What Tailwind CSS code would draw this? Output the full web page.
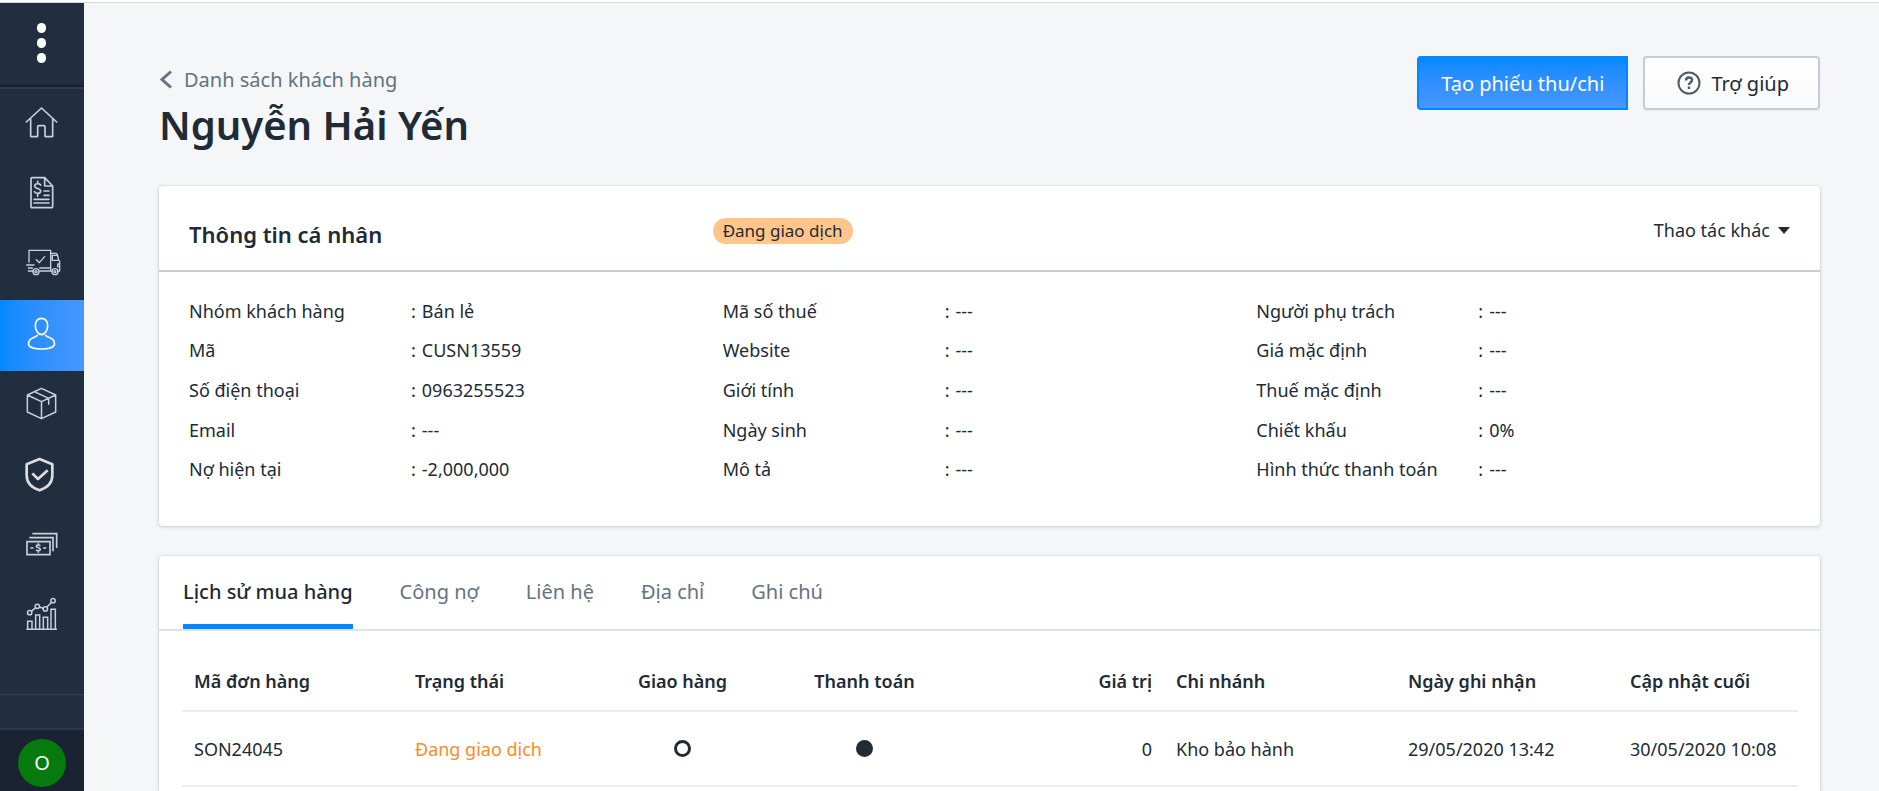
<!DOCTYPE html>
<html lang="vi">
<head>
<meta charset="utf-8">
<title>Nguyễn Hải Yến</title>
<script src="https://cdn.jsdelivr.net/npm/@tailwindcss/browser@4"></script>
</head>
<body class="flex h-screen flex-col overflow-hidden bg-[#f4f6f8] font-['Noto_Sans','Open_Sans',sans-serif] text-lg text-[#212b36]">
<div class="h-[3px] shrink-0 border-b border-[#d5d9de] bg-white"></div>
<div class="flex min-h-0 flex-1">

<aside class="flex w-[84px] shrink-0 flex-col bg-[#212e3f] text-[#c3d2e0]">
  <button type="button" aria-label="Menu" class="flex h-[84px] w-full shrink-0 flex-col items-center justify-center gap-[5px] border-b-2 border-[#19212e] pr-0.5 pb-0.5">
    <span class="h-2.5 w-[9px] rounded-full bg-white"></span>
    <span class="h-2.5 w-[9px] rounded-full bg-white"></span>
    <span class="h-2.5 w-[9px] rounded-full bg-white"></span>
  </button>
  <nav class="grid h-[565px] shrink-0 auto-rows-fr border-t-2 border-[#263d54]">
    <a href="#" aria-label="Trang chủ" class="flex items-center justify-center pr-0.5 pb-1">
      <svg class="size-[33px] overflow-visible" viewBox="0 0 99 99" fill="none" stroke="currentColor" stroke-width="5" stroke-linecap="round" stroke-linejoin="round"><path d="M4 48 49.5 6 95 48M17 40v50q0 2 2 2h17q2 0 2-2V63q0-4 4-4h14q4 0 4 4v27q0 2 2 2h19q2 0 2-2V40"/></svg>
    </a>
    <a href="#" aria-label="Đơn hàng" class="flex items-center justify-center pr-0.5 pb-1">
      <svg class="size-[33px] overflow-visible" viewBox="0 0 99 99" fill="none" stroke="currentColor" stroke-width="5" stroke-linecap="round" stroke-linejoin="round"><path d="M21 5h38l24 25v62q0 3-3 3H21q-3 0-3-3V8q0-3 3-3zM59 5v25h24M57 45h15M57 58h15M27 70h45M27 81h45"/><path d="M47 27c-4-6-18-5-18 3 0 9 18 6 18 15 0 9-15 9-19 2M38 16v6M38 53v8"/></svg>
    </a>
    <a href="#" aria-label="Giao hàng" class="flex items-center justify-center pr-0.5 pb-1">
      <svg class="size-[33px] overflow-visible" viewBox="0 0 99 99" fill="none" stroke="currentColor" stroke-width="4" stroke-linecap="round" stroke-linejoin="round"><path d="M12 49V13h65v62H44M5 57h22M10 66h12M10 75h14M44 66h34M34 41l9 9 16-18M77 22h16q3 0 4 4l4 16 3 4v29h-6M82 75h-2M82 28v15h19M82 28h13M104 54h-6v8h6"/><circle cx="33" cy="77" r="9"/><circle cx="33" cy="77" r="3"/><circle cx="90" cy="77" r="9"/><circle cx="90" cy="77" r="3"/></svg>
    </a>
    <a href="#" aria-label="Khách hàng" aria-current="page" class="flex items-center justify-center bg-linear-to-r from-[#0088ff] to-[#4797ff] pr-0.5 pb-1 text-white">
      <svg class="size-[33px] overflow-visible" viewBox="0 0 99 99" fill="none" stroke="currentColor" stroke-width="5" stroke-linecap="round" stroke-linejoin="round"><path d="M49.5 4C61 4 68 13 68 26S60 53 49.5 53 31 39 31 26 38 4 49.5 4zM37 55c-5 8-26 6-26 22v7c3 8 22 12 38.5 12S85 92 88 84v-7c0-16-21-14-26-22"/></svg>
    </a>
    <a href="#" aria-label="Sản phẩm" class="flex items-center justify-center pr-0.5 pb-1">
      <svg class="size-[33px] overflow-visible" viewBox="0 0 99 99" fill="none" stroke="currentColor" stroke-width="4.5" stroke-linecap="round" stroke-linejoin="round"><path d="M49.5 4 92 24v51L49.5 95 7 75V24zM7 24l42.5 20L92 24M49.5 44v51M28 14l43 20v18"/></svg>
    </a>
    <a href="#" aria-label="Bảo hành" class="flex items-center justify-center pr-0.5 pb-1 text-[#dddddd]">
      <svg class="mr-[3px] size-[33px] overflow-visible" viewBox="0 0 99 99" fill="none" stroke="currentColor" stroke-width="8" stroke-linejoin="round"><path d="M49.5 3 88 19v33c0 23-17 38-38.5 45C28 90 11 75 11 52V19z"/><path d="m28 46 17 17 29-26"/></svg>
    </a>
    <a href="#" aria-label="Sổ quỹ" class="flex items-center justify-center pr-0.5 pb-1">
      <svg class="size-[33px] overflow-visible" viewBox="0 0 99 99" fill="none" stroke="currentColor" stroke-width="5"><path d="M6 41h69v39H6zM13 29h71v41M22 17h73v43M16 60h10M54 60h10"/><path d="M46 54c-3-4-12-4-12 1s12 4 12 9-9 6-13 1M40 46v5M40 68v6"/></svg>
    </a>
    <a href="#" aria-label="Báo cáo" class="flex items-center justify-center pr-0.5 pb-1">
      <svg class="size-[33px] overflow-visible" viewBox="0 0 99 99" fill="none" stroke="currentColor" stroke-width="4.5"><path d="M4 94h92M8 94V70h13v24M32 94V51h12v43M55 94V58h13v36M78 94V34h13v60M19 40l13-11M43 27l12 4M65 28l15-15"/><circle cx="14" cy="44" r="6.5"/><circle cx="37" cy="25" r="6.5"/><circle cx="61" cy="33" r="6.5"/><circle cx="84" cy="8" r="6.5"/></svg>
    </a>
  </nav>
  <div class="mt-auto h-[34px] shrink-0 border-t border-[#2d4163]"></div>
  <div class="flex h-[63px] shrink-0 items-center justify-center border-t-2 border-[#243a50] bg-[#1b2333] pt-1">
    <button type="button" class="size-12 rounded-full bg-[#067a0d] text-xl text-white">O</button>
  </div>
</aside>

<main class="flex min-w-0 flex-1 flex-col pr-[59px] pl-[75px]">
  <header class="flex items-start justify-between pt-[53px]">
    <div class="pt-2">
      <a href="#" class="flex items-center gap-[11px] text-xl leading-[31px] text-[#637381]">
        <svg class="h-[19px] w-[14px]" viewBox="0 0 14 19" fill="none" stroke="currentColor" stroke-width="3"><path d="m12 1.5-9 8 9 8"/></svg>
        Danh sách khách hàng
      </a>
      <h1 class="text-[40px] leading-[60px] font-semibold">Nguyễn Hải Yến</h1>
    </div>
    <div class="flex gap-[15px]">
      <button type="button" class="h-[54px] rounded-l-sm border-2 border-[#0088ff] bg-linear-to-b from-[#0088ff] to-[#4797ff] px-[22px] pt-0.5 text-xl text-white">Tạo phiếu thu/chi</button>
      <button type="button" class="flex h-[54px] items-center gap-[10px] rounded-sm border-2 border-[#c4cdd5] bg-linear-to-b from-white to-[#f9fafb] pr-[29px] pl-[32px] text-xl shadow-xs">
        <svg class="size-6" viewBox="0 0 24 24" fill="none" stroke="#4f5b66" stroke-width="2"><circle cx="12" cy="12" r="10.5"/><path stroke-width="2.5" d="M9 9.5c0-4 6-4 6-.5 0 2.500-3 2.500-3 5M12 15.500v2.500"/></svg>
        <span class="pt-0.5">Trợ giúp</span>
      </button>
    </div>
  </header>

  <section class="mt-[31px] rounded bg-white shadow-[0_0_0_1px_rgba(63,63,68,0.05),0_1px_4px_rgba(63,63,68,0.2)]">
    <div class="relative flex h-[86px] items-center justify-between border-b-2 border-[#c4cdd5] px-[30px]">
      <h2 class="pt-3 text-[22px] font-semibold">Thông tin cá nhân</h2>
      <span class="absolute top-8 left-1/3 rounded-full bg-[#ffc58b] px-[10px] text-[17px] leading-[26px]">Đang giao dịch</span>
      <button type="button" class="flex items-center gap-2 pt-1">Thao tác khác
        <svg class="h-[7px] w-[12px]" viewBox="0 0 12 7" fill="currentColor"><path d="M0 0h12L6 7z"/></svg>
      </button>
    </div>
    <div class="grid grid-cols-3 px-[30px] pt-[19px] pb-[37px]">
      <dl class="grid h-[198px] auto-rows-fr grid-cols-[222px_1fr] items-center">
        <dt>Nhóm khách hàng</dt><dd class="flex gap-1.5"><span>:</span>Bán lẻ</dd>
        <dt>Mã</dt><dd class="flex gap-1.5"><span>:</span>CUSN13559</dd>
        <dt>Số điện thoại</dt><dd class="flex gap-1.5"><span>:</span>0963255523</dd>
        <dt>Email</dt><dd class="flex gap-1.5"><span>:</span>---</dd>
        <dt>Nợ hiện tại</dt><dd class="flex gap-1.5"><span>:</span>-2,000,000</dd>
      </dl>
      <dl class="grid h-[198px] auto-rows-fr grid-cols-[222px_1fr] items-center">
        <dt>Mã số thuế</dt><dd class="flex gap-1.5"><span>:</span>---</dd>
        <dt>Website</dt><dd class="flex gap-1.5"><span>:</span>---</dd>
        <dt>Giới tính</dt><dd class="flex gap-1.5"><span>:</span>---</dd>
        <dt>Ngày sinh</dt><dd class="flex gap-1.5"><span>:</span>---</dd>
        <dt>Mô tả</dt><dd class="flex gap-1.5"><span>:</span>---</dd>
      </dl>
      <dl class="grid h-[198px] auto-rows-fr grid-cols-[222px_1fr] items-center">
        <dt>Người phụ trách</dt><dd class="flex gap-1.5"><span>:</span>---</dd>
        <dt>Giá mặc định</dt><dd class="flex gap-1.5"><span>:</span>---</dd>
        <dt>Thuế mặc định</dt><dd class="flex gap-1.5"><span>:</span>---</dd>
        <dt>Chiết khấu</dt><dd class="flex gap-1.5"><span>:</span>0%</dd>
        <dt>Hình thức thanh toán</dt><dd class="flex gap-1.5"><span>:</span>---</dd>
      </dl>
    </div>
  </section>

  <section class="mt-[30px] flex-1 rounded-t bg-white shadow-[0_0_0_1px_rgba(63,63,68,0.05),0_1px_4px_rgba(63,63,68,0.2)]">
    <div role="tablist" class="flex h-[75px] gap-[47px] border-b-2 border-[#dfe3e8] px-[24px] text-xl text-[#637381]">
      <button type="button" role="tab" aria-selected="true" class="border-b-5 border-[#0088ff] pt-[3px] font-medium text-[#212b36]">Lịch sử mua hàng</button>
      <button type="button" role="tab" aria-selected="false" class="pb-0.5">Công nợ</button>
      <button type="button" role="tab" aria-selected="false" class="pb-0.5">Liên hệ</button>
      <button type="button" role="tab" aria-selected="false" class="pb-0.5">Địa chỉ</button>
      <button type="button" role="tab" aria-selected="false" class="pb-0.5">Ghi chú</button>
    </div>
    <div class="pt-[20px] pr-[22px] pl-[23px]">
      <table class="w-full table-fixed text-left">
        <colgroup><col class="w-[221px]"><col class="w-[189px]"><col class="w-[181px]"><col class="w-[183px]"><col class="w-[208px]"><col class="w-[232px]"><col class="w-[222px]"><col class="w-[180px]"></colgroup>
        <thead>
          <tr class="h-[60px] border-b-2 border-[#ebeef0] *:px-3 *:font-semibold *:whitespace-nowrap">
            <th>Mã đơn hàng</th><th>Trạng thái</th><th class="text-center">Giao hàng</th><th class="text-center">Thanh toán</th><th class="text-right">Giá trị</th><th>Chi nhánh</th><th>Ngày ghi nhận</th><th>Cập nhật cuối</th>
          </tr>
        </thead>
        <tbody>
          <tr class="h-[75px] border-b-2 border-[#ebeef0] *:px-3 *:whitespace-nowrap">
            <td>SON24045</td><td class="text-[#ff8a24]">Đang giao dịch</td>
            <td><span class="mx-auto block size-[17px] rounded-full border-3 border-[#212b36]"></span></td>
            <td><span class="mx-auto block size-[17px] rounded-full bg-[#212b36]"></span></td>
            <td class="text-right">0</td><td>Kho bảo hành</td><td>29/05/2020 13:42</td><td>30/05/2020 10:08</td>
          </tr>
        </tbody>
      </table>
    </div>
  </section>
</main>
</div>
</body>
</html>
